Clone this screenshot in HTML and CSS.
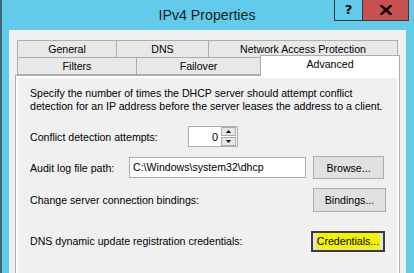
FILE: index.html
```html
<!DOCTYPE html>
<html>
<head>
<meta charset="utf-8">
<link rel="stylesheet" href="styles.css">
</head>
<body>
<div class="window">
  <div class="titlebar">
    <div class="spacer"></div>
    <div class="title">IPv4 Properties</div>
    <div class="controls">
      <div class="btn-help">?</div>
      <div class="btn-close">
        <svg width="12" height="10" viewBox="0 0 12 10"><path d="M1.5 1 L10.5 9 M10.5 1 L1.5 9" stroke="#000" stroke-width="2.4" stroke-linecap="square"/></svg>
      </div>
    </div>
  </div>
  <div class="client">
    <div class="tabs">
      <div class="tabrow row1">
        <div class="tab t-general">General</div>
        <div class="tab t-dns">DNS</div>
        <div class="tab t-nap">Network Access Protection</div>
      </div>
      <div class="tabrow row2">
        <div class="tab t-filters">Filters</div>
        <div class="tab t-failover">Failover</div>
        <div class="tab t-advanced">Advanced</div>
      </div>
    </div>
    <div class="panel">
      <div class="inner">
        <p class="desc">Specify the number of times the DHCP server should attempt conflict<br>detection for an IP address before the server leases the address to a client.</p>
        <div class="row r-conflict">
          <span class="label l-conflict">Conflict detection attempts:</span>
          <div class="spinner">
            <span class="spin-val">0</span>
            <div class="spin-btns">
              <div class="spin-b"><svg width="5" height="3" viewBox="0 0 5 3"><path d="M0 3 L2.5 0 L5 3Z" fill="#000"/></svg></div>
              <div class="spin-b"><svg width="5" height="3" viewBox="0 0 5 3"><path d="M0 0 L2.5 3 L5 0Z" fill="#000"/></svg></div>
            </div>
          </div>
        </div>
        <div class="row r-audit">
          <span class="label l-audit">Audit log file path:</span>
          <div class="textbox">C:\Windows\system32\dhcp</div>
          <div class="button b-browse">Browse...</div>
        </div>
        <div class="row r-bind">
          <span class="label l-grow">Change server connection bindings:</span>
          <div class="button b-bind">Bindings...</div>
        </div>
        <div class="row r-cred">
          <span class="label l-grow">DNS dynamic update registration credentials:</span>
          <div class="button b-cred"><span class="hl">Credentials...</span></div>
        </div>
      </div>
    </div>
  </div>
</div>
</body>
</html>
```
FILE: styles.css
```css
* { box-sizing: border-box; }
html, body { margin: 0; padding: 0; }
body {
  width: 414px;
  height: 273px;
  overflow: hidden;
  font-family: "Liberation Sans", Arial, sans-serif;
}
.window {
  width: 414px;
  height: 273px;
  background: #62CBEA;
  border-left: 2px solid #3d6877;
  display: flex;
  flex-direction: column;
}
.titlebar {
  height: 30px;
  display: grid;
  grid-template-columns: 1fr auto 1fr;
  align-items: start;
  margin-left: -2px;
}
.title {
  font-family: "Liberation Sans", Arial, sans-serif;
  font-size: 14.2px;
  color: #1b1b1b;
  padding-top: 5px;
  line-height: 20px;
}
.controls {
  justify-self: end;
  margin-right: 5px;
  display: flex;
  height: 21px;
  border: 1px solid #3a3a3a;
  border-top: none;
}
.btn-help {
  width: 28px;
  height: 20px;
  background: #62CBEA;
  border-right: 1px solid #3a3a3a;
  font-family: "DejaVu Sans", sans-serif;
  font-weight: bold;
  font-size: 13px;
  line-height: 20px;
  text-align: center;
  color: #000;
}
.btn-close {
  width: 45px;
  height: 20px;
  background: #C75050;
  display: flex;
  align-items: center;
  justify-content: center;
}
.client {
  flex: 1;
  margin: 0 8px 0 7px;
  background: #F0F0F0;
  padding: 10px 6px 0 6px;
  display: flex;
  flex-direction: column;
  min-width: 0;
}
.tabs { font-size: 10.6px; color: #000; }
.tabrow { display: flex; margin-left: 2px; }
.tab {
  flex: none;
  background: #E8E8E8;
  border: 1px solid #ADADAD;
  border-right: none;
  text-align: center;
  line-height: 16px;
  height: 18px;
}
.row1 { height: 17px; margin-right: 2px; }
.row1 .tab { border-bottom: none; }
.row1 .t-nap { border-right: 1px solid #ADADAD; flex: 1; }
.t-general { width: 99px; }
.t-dns { width: 92px; }
.row2 { height: 18px; align-items: flex-end; position: relative; z-index: 1; }
.t-filters { width: 119px; height: 18px; }
.t-failover { width: 124px; height: 18px; }
.t-advanced {
  width: 140px;
  height: 21px;
  background: #FFFFFF;
  border-right: 1px solid #ADADAD;
  border-bottom: none;
  line-height: 16px;
  margin-bottom: -1px;
  margin-top: -3px;
}
.panel {
  flex: 1;
  border: 1px solid #ADADAD;
  border-bottom: none;
  background: #FFFFFF;
  padding: 2px 2px 0 2px;
  display: flex;
  min-width: 0;
}
.inner {
  flex: 1;
  min-width: 0;
  background: #F0F0F0;
  padding: 9px 11px 0 12px;
  font-size: 10.6px;
  color: #000;
}
.desc {
  margin: 0;
  line-height: 13px;
  white-space: nowrap;
}
.row { display: flex; align-items: center; }
.r-conflict { height: 21px; margin-top: 13px; }
.r-audit { height: 23px; margin-top: 9px; }
.r-bind { height: 24px; margin-top: 9px; }
.r-cred { height: 22px; margin-top: 18px; }
.l-conflict { width: 158px; }
.l-audit { width: 99px; }
.l-grow { flex: 1; }
.spinner {
  width: 50px;
  height: 21px;
  background: #fff;
  border: 1px solid #ABADB3;
  display: flex;
  align-items: center;
  justify-content: flex-end;
  padding-right: 1px;
}
.spin-val { margin-right: 3px; font-size: 11px; }
.spin-btns { display: flex; flex-direction: column; gap: 1px; }
.spin-b {
  width: 15px;
  height: 9px;
  background: #E5E5E5;
  border: 1px solid #ADADAD;
  display: flex;
  align-items: center;
  justify-content: center;
}
.textbox {
  width: 177px;
  height: 21px;
  background: #fff;
  border: 1px solid #ABADB3;
  line-height: 19px;
  padding-left: 3px;
}
.button {
  flex: none;
  height: 23px;
  background: #E1E1E1;
  border: 1px solid #ADADAD;
  display: flex;
  align-items: center;
  justify-content: center;
}
.b-browse { width: 71px; margin-left: 7px; }
.b-bind { width: 73px; height: 24px; }
.b-cred {
  width: 74px;
  height: 21px;
  border: 2px solid #3c3c3c;
  margin-right: 1px;
}
.hl {
  background: #F3F300;
  padding: 1px 1px;
  border-radius: 3px;
  line-height: 14px;
}
```
